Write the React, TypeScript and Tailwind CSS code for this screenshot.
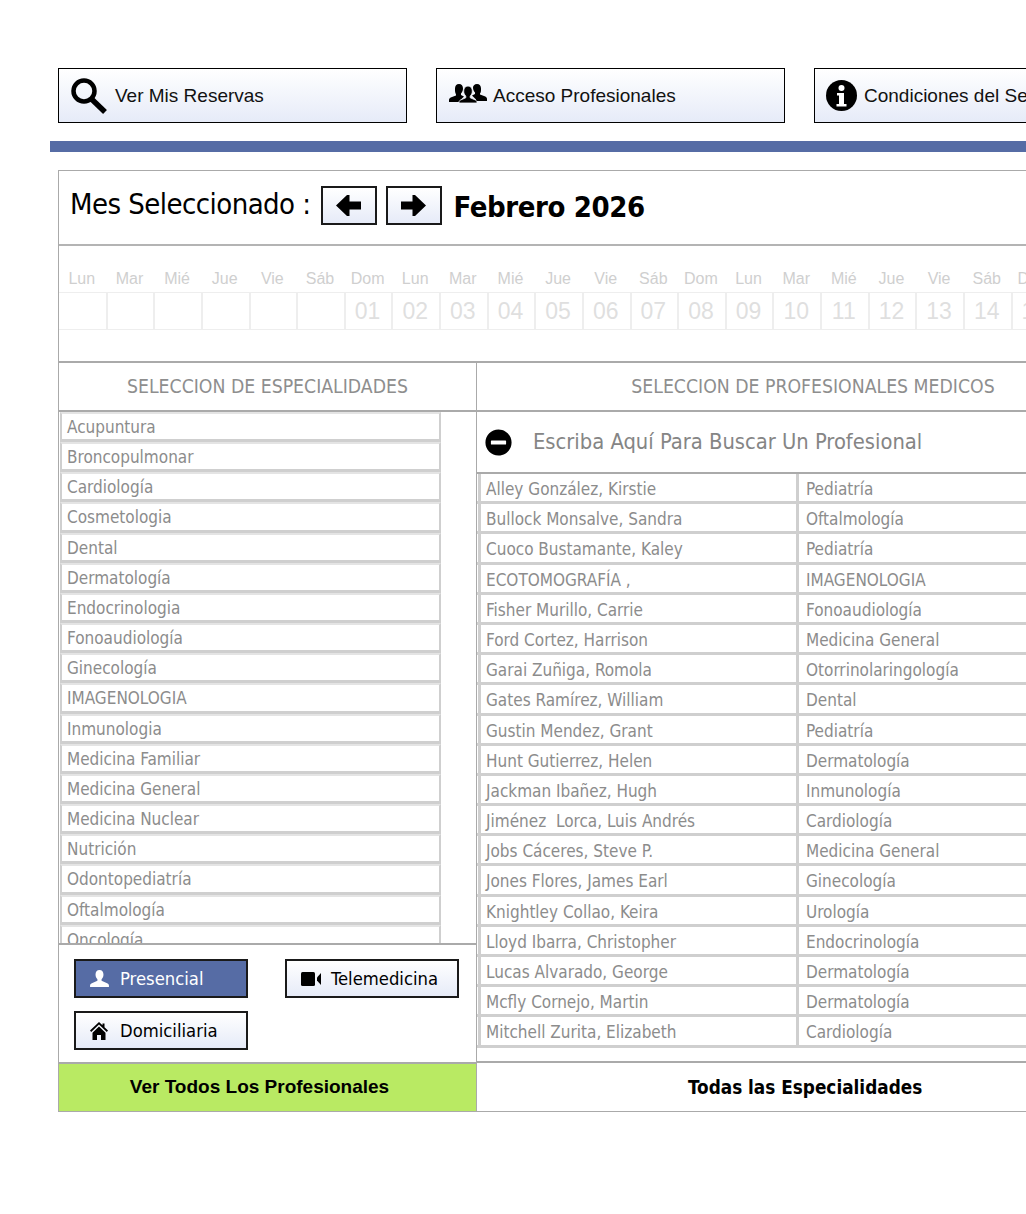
import React from "react";
import { FaMinusCircle } from "react-icons/fa";

const days = ["Lun", "Mar", "Mié", "Jue", "Vie", "Sáb", "Dom"];
const labels = Array.from({ length: 21 }, (_, i) => days[i % 7]);
const dates = ["", "", "", "", "", "", "01", "02", "03", "04", "05", "06", "07", "08", "09", "10", "11", "12", "13", "14", "15"];

const specialties = [
  "Acupuntura", "Broncopulmonar", "Cardiología", "Cosmetologia", "Dental", "Dermatología", "Endocrinologia", "Fonoaudiología", "Ginecología",
  "IMAGENOLOGIA", "Inmunologia", "Medicina Familiar", "Medicina General", "Medicina Nuclear", "Nutrición", "Odontopediatría", "Oftalmología", "Oncología",
];

const doctors = [
  ["Alley González, Kirstie", "Pediatría"],
  ["Bullock Monsalve, Sandra", "Oftalmología"],
  ["Cuoco Bustamante, Kaley", "Pediatría"],
  ["ECOTOMOGRAFÍA ,", "IMAGENOLOGIA"],
  ["Fisher Murillo, Carrie", "Fonoaudiología"],
  ["Ford Cortez, Harrison", "Medicina General"],
  ["Garai Zuñiga, Romola", "Otorrinolaringología"],
  ["Gates Ramírez, William", "Dental"],
  ["Gustin Mendez, Grant", "Pediatría"],
  ["Hunt Gutierrez, Helen", "Dermatología"],
  ["Jackman Ibañez, Hugh", "Inmunología"],
  ["Jiménez\u00a0 Lorca, Luis Andrés", "Cardiología"],
  ["Jobs Cáceres, Steve P.", "Medicina General"],
  ["Jones Flores, James Earl", "Ginecología"],
  ["Knightley Collao, Keira", "Urología"],
  ["Lloyd Ibarra, Christopher", "Endocrinología"],
  ["Lucas Alvarado, George", "Dermatología"],
  ["Mcfly Cornejo, Martin", "Dermatología"],
  ["Mitchell Zurita, Elizabeth", "Cardiología"],
];

const btnGradient = "bg-gradient-to-b from-white to-[#e6ebf8]";

const SearchIcon = () => (
  <svg viewBox="0 0 36 36" className="h-[36px] w-[36px]">
    <circle cx="13" cy="13" r="10.500" fill="none" stroke="black" strokeWidth="4.500" />
    <path d="M20.500 21 L34 34" stroke="black" strokeWidth="5.500" />
  </svg>
);

const InfoIcon = () => (
  <svg viewBox="0 0 31 31" className="h-[31px] w-[31px]">
    <circle cx="15.500" cy="15.500" r="15.500" fill="black" />
    <circle cx="15.500" cy="8" r="3" fill="white" />
    <path d="M11 13h7v11h2.500v2.500h-10V24H13v-8.500h-2z" fill="white" />
  </svg>
);

const UsersIcon = () => (
  <svg viewBox="0 0 38 20" className="h-[20px] w-[38px] fill-black">
    <path d="M10 1c2.600 0 4 2 4 4.600 0 2-.8 3.800-2 4.800v1.600l3 1.500-4 4v1.500H0v-2c0-1.500 1-2.200 3-3l4-1.600v-1C5.800 9.400 6 7.500 6 5.600 6 3 7.400 1 10 1z" />
    <path d="M28 1c2.600 0 4 2 4 4.600 0 1.900.2 3.800-1 4.800v1l4 1.600c2 .8 3 1.500 3 3v2H27v-1.500l-4-4 3-1.500v-1.600c-1.200-1-2-2.800-2-4.800C24 3 25.400 1 28 1z" />
    <path d="M19 3c2.800 0 4.300 2.200 4.300 5 0 2.200-.8 4-2.100 5v1.800l4.800 2c1.200.5 2 1.200 2 2.200v1H10v-1c0-1 .8-1.700 2-2.200l4.800-2V13c-1.300-1-2.100-2.800-2.100-5 0-2.800 1.500-5 4.300-5z" stroke="#f4f6fc" strokeWidth="0.8" />
  </svg>
);

const UserIcon = () => (
  <svg viewBox="0 0 20 18" className="h-[17px] w-[19px] fill-white">
    <path d="M10 0c2.800 0 4.200 2.100 4.200 4.800 0 2.100-.8 3.900-2 4.900v1.800l5.300 2.200c1.600.7 2.500 1.500 2.500 2.600V18H0v-1.700c0-1.100.9-1.900 2.500-2.600l5.300-2.200V9.700c-1.200-1-2-2.800-2-4.900C5.800 2.100 7.200 0 10 0z" />
  </svg>
);

const VideoIcon = () => (
  <svg viewBox="0 0 20 14" className="h-[14px] w-[20px] fill-black">
    <rect x="0" y="0" width="14" height="14" rx="1.500" />
    <path d="M16 5.500 20 1v12l-4-4.500z" />
  </svg>
);

const HomeIcon = () => (
  <svg viewBox="0 0 18 18" className="h-[18px] w-[18px] fill-black">
    <path d="M9 0 12.500 3.300V1.500h2v3.700L18 8.600 16.800 10 9 2.600 1.200 10 0 8.600z" />
    <path d="M9 4.500 15.500 10.700V18H11v-5H7v5H2.500v-7.300z" />
  </svg>
);

const ArrowIcon = ({ right }: { right?: boolean }) => (
  <svg viewBox="0 0 25 21" className={`h-[21px] w-[25px] fill-black ${right ? "rotate-180" : ""}`}>
    <path d="M0 10.500 11 0h2.500v6.500H25v8H13.500V21H11z" />
  </svg>
);

function TopButton({ icon, label }: { icon: React.ReactNode; label: string }) {
  return (
    <div className={`flex h-[55px] w-[349px] shrink-0 items-center border border-black ${btnGradient} font-['Liberation_Sans',sans-serif] text-[19px] text-[#111]`}>
      {icon}
      <span className="mt-[2px] whitespace-nowrap">{label}</span>
    </div>
  );
}

function ModeButton({ icon, label, active }: { icon: React.ReactNode; label: string; active?: boolean }) {
  return (
    <div
      className={`flex h-[39px] w-[174px] items-center border-2 border-[#1a1a1a] pl-[14px] text-[18.300px] ${
        active ? "bg-[#566ca5] text-white" : `${btnGradient} text-black`
      }`}
    >
      <span className="flex w-[30px] shrink-0 items-center">{icon}</span>
      <span className="whitespace-nowrap">{label}</span>
    </div>
  );
}

export default function App() {
  return (
    <div className="h-[1214px] w-[1026px] overflow-hidden bg-white font-['DejaVu_Sans_Condensed','DejaVu_Sans',sans-serif]">
      <div className="w-[1200px] pl-[50px] pt-[68px]">
        <div className="flex gap-[29px] pl-[8px]">
          <TopButton icon={<span className="ml-[12px] mr-[8px]"><SearchIcon /></span>} label="Ver Mis Reservas" />
          <TopButton icon={<span className="ml-[12px] mr-[6px] mb-[5px]"><UsersIcon /></span>} label="Acceso Profesionales" />
          <TopButton icon={<span className="ml-[11px] mr-[7px]"><InfoIcon /></span>} label="Condiciones del Servicio" />
        </div>

        <div className="mt-[18px] h-[11px] bg-[#566ca5]" />

        <div className="ml-[8px] mt-[18px] w-[1092px] border border-[#aaa]">
          <div className="flex h-[75px] items-center border-b-2 border-[#b4b4b4] pl-[11px]">
            <span className="mr-[10px] mb-[6px] text-[29px] leading-none tracking-[-0.55px] text-black">Mes Seleccionado :</span>
            <div className={`mb-[4px] flex h-[39px] w-[56px] items-center justify-center border-2 border-[#1a1a1a] ${btnGradient}`}>
              <ArrowIcon />
            </div>
            <div className={`mb-[4px] ml-[9px] flex h-[39px] w-[56px] items-center justify-center border-2 border-[#1a1a1a] ${btnGradient}`}>
              <ArrowIcon right />
            </div>
            <span className="ml-[12px] text-[29px] font-bold leading-none tracking-[-0.4px] text-black">Febrero 2026</span>
          </div>

          <div className="h-[117px] border-b-2 border-[#aaa] font-['Liberation_Sans',sans-serif]">
            <div className="-ml-[1px] flex pt-[23px] text-[16px] leading-[19px] text-[#cfcfcf]">
              {labels.map((d, i) => (
                <div key={i} className="w-[47.630px] shrink-0 text-center">
                  {d}
                </div>
              ))}
            </div>
            <div className="mt-[4px] flex h-[38px] border-y border-[#eee] pl-[1px] text-[23px] leading-[36px] text-[#dfdfdf]">
              {dates.map((d, i) => (
                <div key={i} className="w-[47.630px] shrink-0 border-r-2 border-[#eee] pr-[2px] text-center">
                  {d}
                </div>
              ))}
            </div>
          </div>

          <div className="flex">
            <div className="w-[418px] shrink-0 border-r border-[#aaa]">
              <div className="flex h-[49px] items-center justify-center border-b-2 border-[#aaa] pt-[1px] text-[19.250px] text-[#8e8e8e]">
                SELECCION DE ESPECIALIDADES
              </div>
              <div className="h-[533px] overflow-hidden border-b-2 border-[#aaa] pl-[1px]">
                {specialties.map((s) => (
                  <div
                    key={s}
                    className="h-[30.170px] w-[381px] border-x-2 border-b-[3px] border-t-2 border-[#cfcfcf] border-t-[#e4e4e4] pl-[5px] text-[17px] leading-[27px] text-[#8c8c8c]"
                  >
                    {s}
                  </div>
                ))}
              </div>
              <div className="grid h-[117px] grid-cols-[211px_174px] content-start gap-y-[13px] pl-[15px] pt-[14px]">
                <ModeButton active icon={<UserIcon />} label="Presencial" />
                <ModeButton icon={<VideoIcon />} label="Telemedicina" />
                <ModeButton icon={<HomeIcon />} label="Domiciliaria" />
              </div>
              <div className="flex h-[49px] items-center justify-center border-t-2 border-[#aaa] bg-[#b9ea63] pr-[16px] font-['Liberation_Sans',sans-serif] text-[19px] font-bold text-black">
                Ver Todos Los Profesionales
              </div>
            </div>

            <div className="min-w-0 flex-1">
              <div className="flex h-[49px] items-center justify-center border-b-2 border-[#aaa] pt-[1px] text-[19.250px] text-[#8e8e8e]">
                SELECCION DE PROFESIONALES MEDICOS
              </div>
              <div className="flex h-[62px] items-center border-b-2 border-[#aaa] pl-[8px]">
                <FaMinusCircle className="h-[27px] w-[27px]" />
                <span className="ml-[21px] text-[21.750px] text-[#858585]">Escriba Aquí Para Buscar Un Profesional</span>
              </div>
              <div className="h-[589px] border-b-2 border-[#aaa]">
                {doctors.map(([name, spec]) => (
                  <div key={name} className="flex h-[30.200px] border-b-[3px] border-[#cfcfcf] pl-[1px] text-[17px] leading-[31px] text-[#8c8c8c]">
                    <div className="w-[321px] shrink-0 border-x-[3px] border-[#cfcfcf] pl-[5px]">{name}</div>
                    <div className="flex-1 pl-[7px]">{spec}</div>
                  </div>
                ))}
              </div>
              <div className="flex h-[48px] items-center pl-[211px] pt-[3px] text-[18.800px] font-bold text-black">
                Todas las Especialidades
              </div>
            </div>
          </div>
        </div>
      </div>
    </div>
  );
}
